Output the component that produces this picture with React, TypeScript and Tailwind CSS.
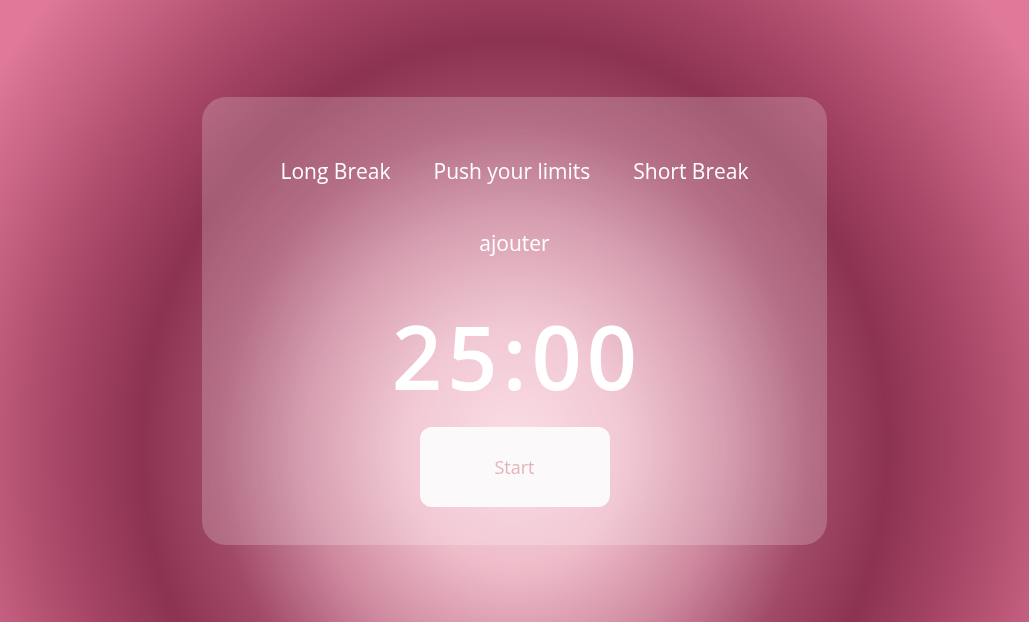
import React from "react";

export default function App() {
  return (
    <div
      className="w-full h-[622px] overflow-hidden flex justify-center bg-[radial-gradient(ellipse_620px_680px_at_50%_72%,#fad6e0_0%,#eebbc9_18%,#cf8aa0_33%,#a14a68_48%,#8c3351_60%,#a54464_72%,#df7899_100%)]"
      style={{ fontFamily: '"Open Sans", "Noto Sans", sans-serif' }}
    >
      <div className="mt-[97px] w-[625px] h-[448px] rounded-[24px] bg-white/20 backdrop-blur-sm flex flex-col items-center pt-[60px] text-white">
        <nav className="flex items-center gap-[43px] h-[28px] text-[21px] leading-[28px]">
          <button className="cursor-pointer">Long Break</button>
          <button className="cursor-pointer">Push your limits</button>
          <button className="cursor-pointer">Short Break</button>
        </nav>
        <div className="mt-[44px] h-[28px] text-[21px] leading-[28px]">ajouter</div>
        <div className="mt-[55px] h-[88px] text-[88px] leading-none font-semibold tracking-[5px] pl-[5px]">25:00</div>
        <button className="mt-[27px] w-[190px] h-[80px] rounded-[12px] bg-[#fcf9fa] text-[#e2b5bb] text-[18px]">
          Start
        </button>
      </div>
    </div>
  );
}
